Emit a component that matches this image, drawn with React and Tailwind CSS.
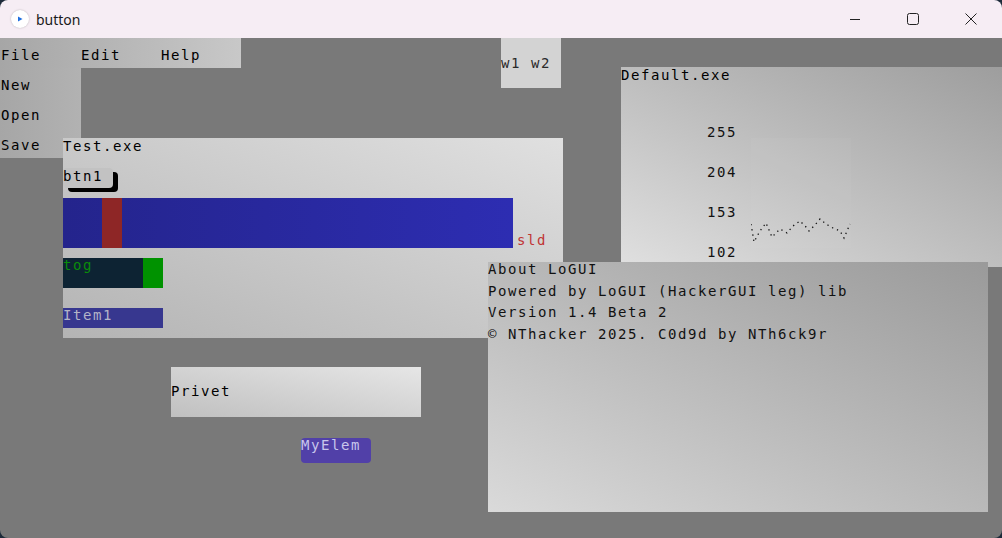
import React from 'react';

const mono = "font-['DejaVu_Sans_Mono','Liberation_Mono',monospace] text-[14px] tracking-[1.57px] whitespace-pre";

const points = [
  [0, 86], [3, 104], [9, 93], [15, 85], [21, 99], [29, 91], [36, 95], [42, 88], [49, 83],
  [55, 89], [58, 93], [64, 87], [69, 81], [75, 86], [82, 90], [89, 93], [93, 100], [99, 86],
];

const TitleBar = () => (
  <div className="h-[38px] shrink-0 bg-[#f6edf4] flex items-center">
    <div className="ml-[11px] w-[18px] h-[18px] rounded-full bg-white shadow-[0_0_2px_rgba(0,0,0,0.25)] flex items-center justify-center">
      <svg width="6" height="6" viewBox="0 0 6 6">
        <path d="M1 0.5 L5.5 3 L1 5.5 Z" fill="#1f6fe0" />
      </svg>
    </div>
    <span className="ml-[7px] text-[14px] text-[#1a1a1a] font-['Noto_Sans',sans-serif]">button</span>
    <div className="flex-1" />
    <div className="flex h-full mr-[2px]">
      <div className="w-[58px] h-full flex items-center justify-center">
        <svg width="10" height="10" viewBox="0 0 10 10">
          <path d="M0 5.5 H10" stroke="#222" strokeWidth="1" />
        </svg>
      </div>
      <div className="w-[58px] h-full flex items-center justify-center">
        <svg width="12" height="12" viewBox="0 0 12 12">
          <rect x="0.5" y="0.5" width="11" height="11" rx="2" fill="none" stroke="#222" strokeWidth="1" />
        </svg>
      </div>
      <div className="w-[58px] h-full flex items-center justify-center">
        <svg width="12" height="12" viewBox="0 0 12 12">
          <path d="M0.5 0.5 L11.5 11.5 M11.5 0.5 L0.5 11.5" stroke="#222" strokeWidth="1" />
        </svg>
      </div>
    </div>
  </div>
);

export default function App() {
  return (
    <div className="w-[1002px] h-[538px] bg-[#1d2b3a]">
      <div className="w-full h-full rounded-[8px] overflow-hidden flex flex-col">
        <TitleBar />
        <div className={`relative flex-1 bg-[#797979] overflow-hidden text-black ${mono}`}>
          {/* menu dropdown */}
          <div className="absolute left-0 top-[30px] w-[81px] h-[90px] flex flex-col bg-gradient-to-r from-[#a6a6a6] to-[#b2b2b2]">
            <div className="h-[30px] pt-2 leading-[18px] pl-[1px]">New</div>
            <div className="h-[30px] pt-2 leading-[18px] pl-[1px]">Open</div>
            <div className="h-[30px] pt-2 leading-[18px] pl-[1px]">Save</div>
          </div>

          {/* Test.exe */}
          <div className="absolute left-[63px] top-[100px] w-[500px] h-[200px] flex flex-col items-start bg-gradient-to-tr from-[#b4b4b4] to-[#e0e0e0]">
            <div className="leading-[16px]">Test.exe</div>
            <div className="mt-[14px] w-[50px] h-[20px] rounded-[4px] bg-[#c2c2c2] shadow-[5px_4px_0_#000] leading-[16px]">btn1</div>
            <div className="mt-[10px] flex items-end">
              <div className="w-[450px] h-[50px] flex bg-gradient-to-r from-[#24248c] to-[#2d2db2]">
                <div className="ml-[39px] w-[20px] h-full bg-[#8e2626]" />
              </div>
              <div className="ml-[4px] mb-[-1px] leading-[18px] text-[#c03434]">sld</div>
            </div>
            <div className="mt-[10px] w-[100px] h-[30px] flex bg-[#0d2333]">
              <div className="flex-1 leading-[14px] text-[#0a8c0a]">tog</div>
              <div className="w-[20px] h-full bg-[#009200]" />
            </div>
            <div className="mt-[20px] w-[100px] h-[20px] bg-[#37378f] leading-[14px] text-[#b4b4c8]">Item1</div>
          </div>

          {/* menu bar */}
          <div className="absolute left-0 top-0 w-[241px] h-[30px] flex bg-gradient-to-r from-[#a6a6a6] to-[#c8c8c8]">
            <div className="w-[80px] pt-2 leading-[18px] pl-[1px]">File</div>
            <div className="w-[80px] pt-2 leading-[18px] pl-[1px]">Edit</div>
            <div className="w-[80px] pt-2 leading-[18px] pl-[1px]">Help</div>
          </div>

          {/* w1 w2 */}
          <div className="absolute left-[501px] top-0 w-[60px] h-[50px] bg-[#d3d3d3] flex items-center leading-[18px] text-[#2a2a2a]">
            w1 w2
          </div>

          {/* Privet */}
          <div className="absolute left-[171px] top-[329px] w-[250px] h-[50px] flex items-center pb-[3px] leading-[18px] bg-gradient-to-tr from-[#c0c0c0] to-[#e6e6e6]">
            Privet
          </div>

          {/* MyElem */}
          <div className="absolute left-[301px] top-[400px] w-[70px] h-[25px] rounded-[4px] bg-[#5140a8] leading-[14px] text-[#c8c6ec]">
            MyElem
          </div>

          {/* Default.exe */}
          <div className="absolute left-[621px] top-[29px] w-[400px] h-[200px] flex flex-col bg-gradient-to-tr from-[#e0e0e0] to-[#9c9c9c]">
            <div className="leading-[16px]">Default.exe</div>
            <div className="mt-[40px] ml-[86px] flex items-start">
              <div className="flex flex-col gap-[22px] leading-[18px] text-[#111]">
                <div>255</div>
                <div>204</div>
                <div>153</div>
                <div>102</div>
              </div>
              <div className="ml-[14px] mt-[15px] w-[100px] h-[110px] bg-white/[0.03]">
                <svg width="100" height="110" viewBox="0 0 100 110">
                  <polyline
                    points={points.map((p) => p.join(',')).join(' ')}
                    fill="none"
                    stroke="#111"
                    strokeWidth="1.3"
                    strokeDasharray="1.3 4"
                  />
                </svg>
              </div>
            </div>
          </div>

          {/* About */}
          <div className="absolute left-[488px] top-[224px] w-[500px] h-[250px] bg-gradient-to-tr from-[#dadada] to-[#9a9a9a]">
            <div className="-mt-[3px] flex flex-col leading-[21.67px] text-[#111]">
              <div>About LoGUI</div>
              <div>Powered by LoGUI (HackerGUI leg) lib</div>
              <div>Version 1.4 Beta 2</div>
              <div>© NThacker 2025. C0d9d by NTh6ck9r</div>
            </div>
          </div>
        </div>
      </div>
    </div>
  );
}
